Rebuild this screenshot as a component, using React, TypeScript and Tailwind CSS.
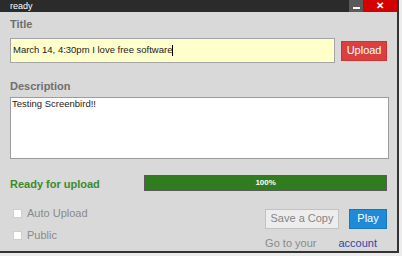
import React from 'react';

const sans = { fontFamily: '"Liberation Sans", Arial, sans-serif' };

export default function App() {
  return (
    <div className="w-[402px] h-[256px] bg-[#ececec] overflow-hidden" style={sans}>
      <div className="w-[399px] h-[253px] bg-[#d9d9d9] border-r-2 border-b-2 border-[#333] flex flex-col">
        {/* title bar */}
        <div className="h-[12px] bg-[#2b2b2b] flex items-stretch">
          <span className="pl-[10px] text-[9px] leading-[12px] text-white">ready</span>
          <div className="ml-auto w-[14px] bg-[#5a5a5a] flex items-end justify-center pb-[3px]">
            <div className="w-[7px] h-[2px] bg-white" />
          </div>
          <div className="w-[34px] bg-[#d30000] flex items-center justify-center text-white text-[10px] font-bold leading-none">
            ✕
          </div>
        </div>

        <div className="px-[10px] flex flex-col">
          <div className="mt-[6px] h-[12px] text-[11px] leading-[12px] font-bold text-[#6f6f6f]">Title</div>

          <div className="mt-[8px] flex items-center gap-[6px]">
            <div className="w-[326px] h-[25px] bg-[#ffffcc] border border-[#a5a5a5] flex items-center pl-[2px] text-[9.5px] text-[#222]">
              March 14, 4:30pm I love free software
              <span className="inline-block w-px h-[11px] bg-black" />
            </div>
            <button className="w-[46px] h-[20px] bg-[#d9403f] border border-[#c33] text-white text-[11px] leading-none">
              Upload
            </button>
          </div>

          <div className="mt-[17px] h-[12px] text-[11px] leading-[12px] font-bold text-[#6f6f6f]">Description</div>

          <div className="mt-[5px] w-[379px] h-[62px] bg-white border border-[#9c9c9c] px-[1px] text-[9.5px] leading-[12px] text-[#222]">
            Testing Screenbird!!
          </div>

          <div className="mt-[14px] flex items-center">
            <div className="w-[135px] text-[11px] font-bold text-[#3b8a2c] pt-[3px]">Ready for upload</div>
            <div className="w-[244px] h-[16px] bg-[#2f7d1f] border border-[#5a5a5a] flex items-center justify-center text-[8px] font-bold text-white">
              100%
            </div>
          </div>

          <div className="flex">
            <div className="pl-[3px] pt-[14px] flex flex-col gap-[8px] text-[11px] text-[#8a8a8a]">
              <label className="flex items-center gap-[5px] h-[14px]">
                <span className="w-[9px] h-[9px] bg-white border border-[#cfcfcf]" />
                Auto Upload
              </label>
              <label className="flex items-center gap-[5px] h-[14px]">
                <span className="w-[9px] h-[9px] bg-white border border-[#cfcfcf]" />
                Public
              </label>
            </div>
            <div className="ml-auto pt-[16px] flex flex-col items-end">
              <div className="flex gap-[10px]">
                <button className="w-[74px] h-[20px] bg-[#ededed] border border-[#c2c2c2] text-[11px] text-[#858585] leading-none">
                  Save a Copy
                </button>
                <button className="w-[38px] h-[20px] bg-[#1d8bd8] border border-[#1a74b8] text-[11px] text-white leading-none">
                  Play
                </button>
              </div>
              <div className="mt-[8px] flex text-[11px] leading-[12px] pr-[10px]">
                <span className="text-[#8a8a8a]">Go to your</span>
                <span className="ml-[22px] text-[#3443a8]">account</span>
              </div>
            </div>
          </div>
        </div>
      </div>
    </div>
  );
}
